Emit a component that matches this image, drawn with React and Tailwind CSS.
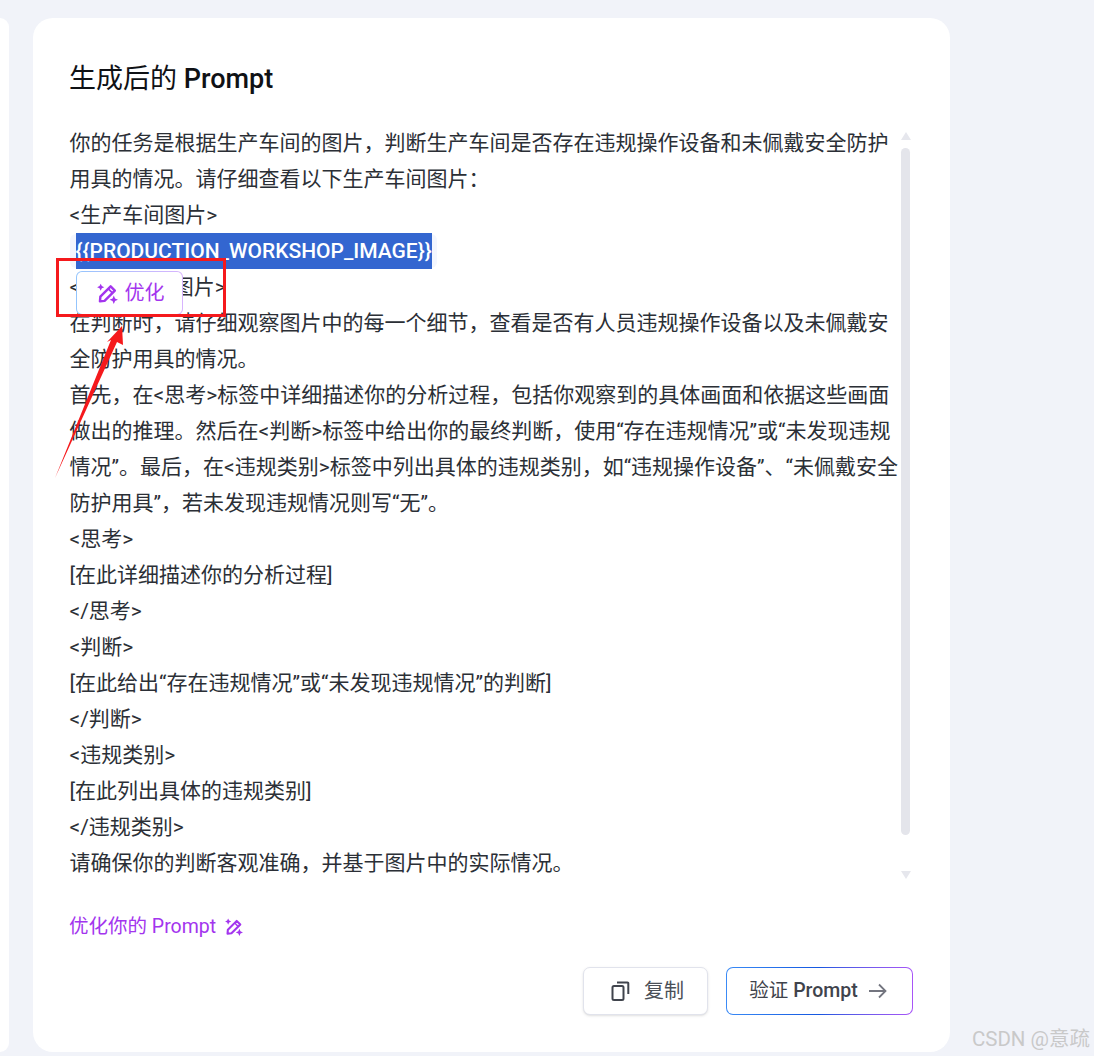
const lines = [
  "你的任务是根据生产车间的图片，判断生产车间是否存在违规操作设备和未佩戴安全防护",
  "用具的情况。请仔细查看以下生产车间图片：",
  "<生产车间图片>",
  "__VAR__",
  "</生产车间图片>",
  "在判断时，请仔细观察图片中的每一个细节，查看是否有人员违规操作设备以及未佩戴安",
  "全防护用具的情况。",
  "首先，在<思考>标签中详细描述你的分析过程，包括你观察到的具体画面和依据这些画面",
  "做出的推理。然后在<判断>标签中给出你的最终判断，使用“存在违规情况”或“未发现违规",
  "情况”。最后，在<违规类别>标签中列出具体的违规类别，如“违规操作设备”、“未佩戴安全",
  "防护用具”，若未发现违规情况则写“无”。",
  "<思考>",
  "[在此详细描述你的分析过程]",
  "</思考>",
  "<判断>",
  "[在此给出“存在违规情况”或“未发现违规情况”的判断]",
  "</判断>",
  "<违规类别>",
  "[在此列出具体的违规类别]",
  "</违规类别>",
  "请确保你的判断客观准确，并基于图片中的实际情况。",
];

function WandIcon({ className }) {
  return (
    <svg viewBox="0 0 20 20" fill="none" stroke="currentColor" strokeWidth="2.3" strokeLinejoin="round" className={className}>
      <path d="M13 3.2 17 7.2 7.2 17 2.8 17.4 3.2 13Z" />
      <path d="M10.8 5.6 14.6 9.4" strokeWidth="1.6" />
      <path d="M3.5 0.6 4.6 2.9 6.9 4 4.6 5.1 3.5 7.4 2.4 5.1 0.1 4 2.4 2.9Z" fill="currentColor" stroke="none" />
      <path d="M16 12 17.2 14.8 20 16 17.2 17.2 16 20 14.8 17.2 12 16 14.8 14.8Z" fill="currentColor" stroke="none" />
    </svg>
  );
}

function Scrollbar() {
  return (
    <div className="mr-[3px] w-[9px] h-[756px] flex flex-col items-center shrink-0">
      <div className="mt-[8px] w-0 h-0 border-x-[5px] border-x-transparent border-b-[8px] border-b-[#e6e7ed]" />
      <div className="mt-[8px] w-[9px] h-[687px] rounded-full bg-[#e4e5eb]" />
      <div className="mt-[36px] w-0 h-0 border-x-[5px] border-x-transparent border-t-[8px] border-t-[#e6e7ed]" />
    </div>
  );
}

export default function App() {
  return (
    <div
      className="relative h-[1056px] w-[1094px] overflow-hidden bg-[#f1f3f9] pt-[18px] pb-[4px] flex gap-[24px] text-[#2b2f36]"
      style={{ fontFamily: 'Roboto, "Noto Sans CJK SC", sans-serif' }}
    >
      <div className="w-[9px] h-full bg-white rounded-r-[16px]" />

      <div className="w-[917px] h-full bg-white rounded-[20px] pt-[43px] pl-[37px] pr-[37px]">
        <h2 className="-ml-px text-[27px] leading-[36px] font-normal text-[#0f1115]">
          生成后的 <span className="font-medium">Prompt</span>
        </h2>

        <div className="mt-[27px] flex justify-between">
          <div className="-ml-[0.5px] pt-px text-[21px] leading-[36px] whitespace-nowrap h-[756px]">
            {lines.map((line, i) =>
              line === "__VAR__" ? (
                <div key={i} className="h-[36px] flex items-center">
                  <div className="w-[367px] h-[34px] rounded-[6px] bg-[#f3f6fe] pl-[6px] flex items-center">
                    <span className="h-[36px] bg-[#3366d0] text-white font-medium text-[21px] leading-[36px]">
                      {"{{PRODUCTION_WORKSHOP_IMAGE}}"}
                    </span>
                  </div>
                </div>
              ) : (
                <div key={i}>{line}</div>
              )
            )}
          </div>
          <Scrollbar />
        </div>

        <div className="mt-[29px] flex items-center gap-[9px] text-[19.5px] leading-[36px] text-[#a335ee] -ml-px">
          优化你的 Prompt
          <WandIcon className="w-[18px] h-[18px]" />
        </div>

        <div className="mt-[22px] flex justify-end gap-[18px]">
          <button className="w-[125px] h-[48px] bg-white border border-[#e1e3ec] rounded-[7px] shadow-sm flex items-center justify-center gap-[14px] pl-[3px] text-[20px] text-[#4b5058]">
            <svg viewBox="0 0 20 20" fill="none" stroke="#40444d" strokeWidth="2" strokeLinejoin="round" className="w-[20px] h-[20px]">
              <rect x="2.5" y="5" width="11" height="14" rx="1.5" />
              <path d="M7 1.5H17.5a.8.8 0 0 1 .8.8V13" />
            </svg>
            复制
          </button>
          <div className="w-[187px] h-[48px] p-px rounded-[7px] bg-linear-to-r from-[#3b8bf6] via-[#1557e0] to-[#a855f7]">
            <button className="w-full h-full bg-white rounded-[6px] flex items-center justify-center gap-[10px] pr-[2px] text-[19.5px] font-medium text-[#3f434c]">
              <span><span className="font-normal">验证</span> Prompt</span>
              <svg viewBox="0 0 20 20" fill="none" stroke="#73757f" strokeWidth="1.8" className="w-[20px] h-[20px]">
                <path d="M1 10h17M11 3.5 17.5 10 11 16.5" />
              </svg>
            </button>
          </div>
        </div>
      </div>

      {/* floating optimise button */}
      <div className="absolute left-[76px] top-[271px] w-[107px] h-[44px] p-px rounded-[6px] bg-linear-to-r from-[#93c5fd] to-[#d8b4fe]">
        <div className="w-full h-full rounded-[5px] bg-white flex items-center justify-center gap-[7px] pl-[2px] text-[20px] text-[#a335ee]">
          <WandIcon className="w-[21px] h-[21px]" />
          优化
        </div>
      </div>

      {/* annotation */}
      <div className="absolute left-[56px] top-[258px] w-[170px] h-[59px] border-[3px] border-[#f5191c]" />
      <svg className="absolute left-[50px] top-[320px]" width="80" height="162" viewBox="0 0 80 162">
        <path d="M5 158 61 20 57 22 72 6 73 25 67 22Z" fill="#f5191c" />
      </svg>

      <div className="absolute right-[4px] bottom-[5px] text-[20.5px] leading-[24px] text-[#c9c9c9]">CSDN @意疏</div>
    </div>
  );
}
